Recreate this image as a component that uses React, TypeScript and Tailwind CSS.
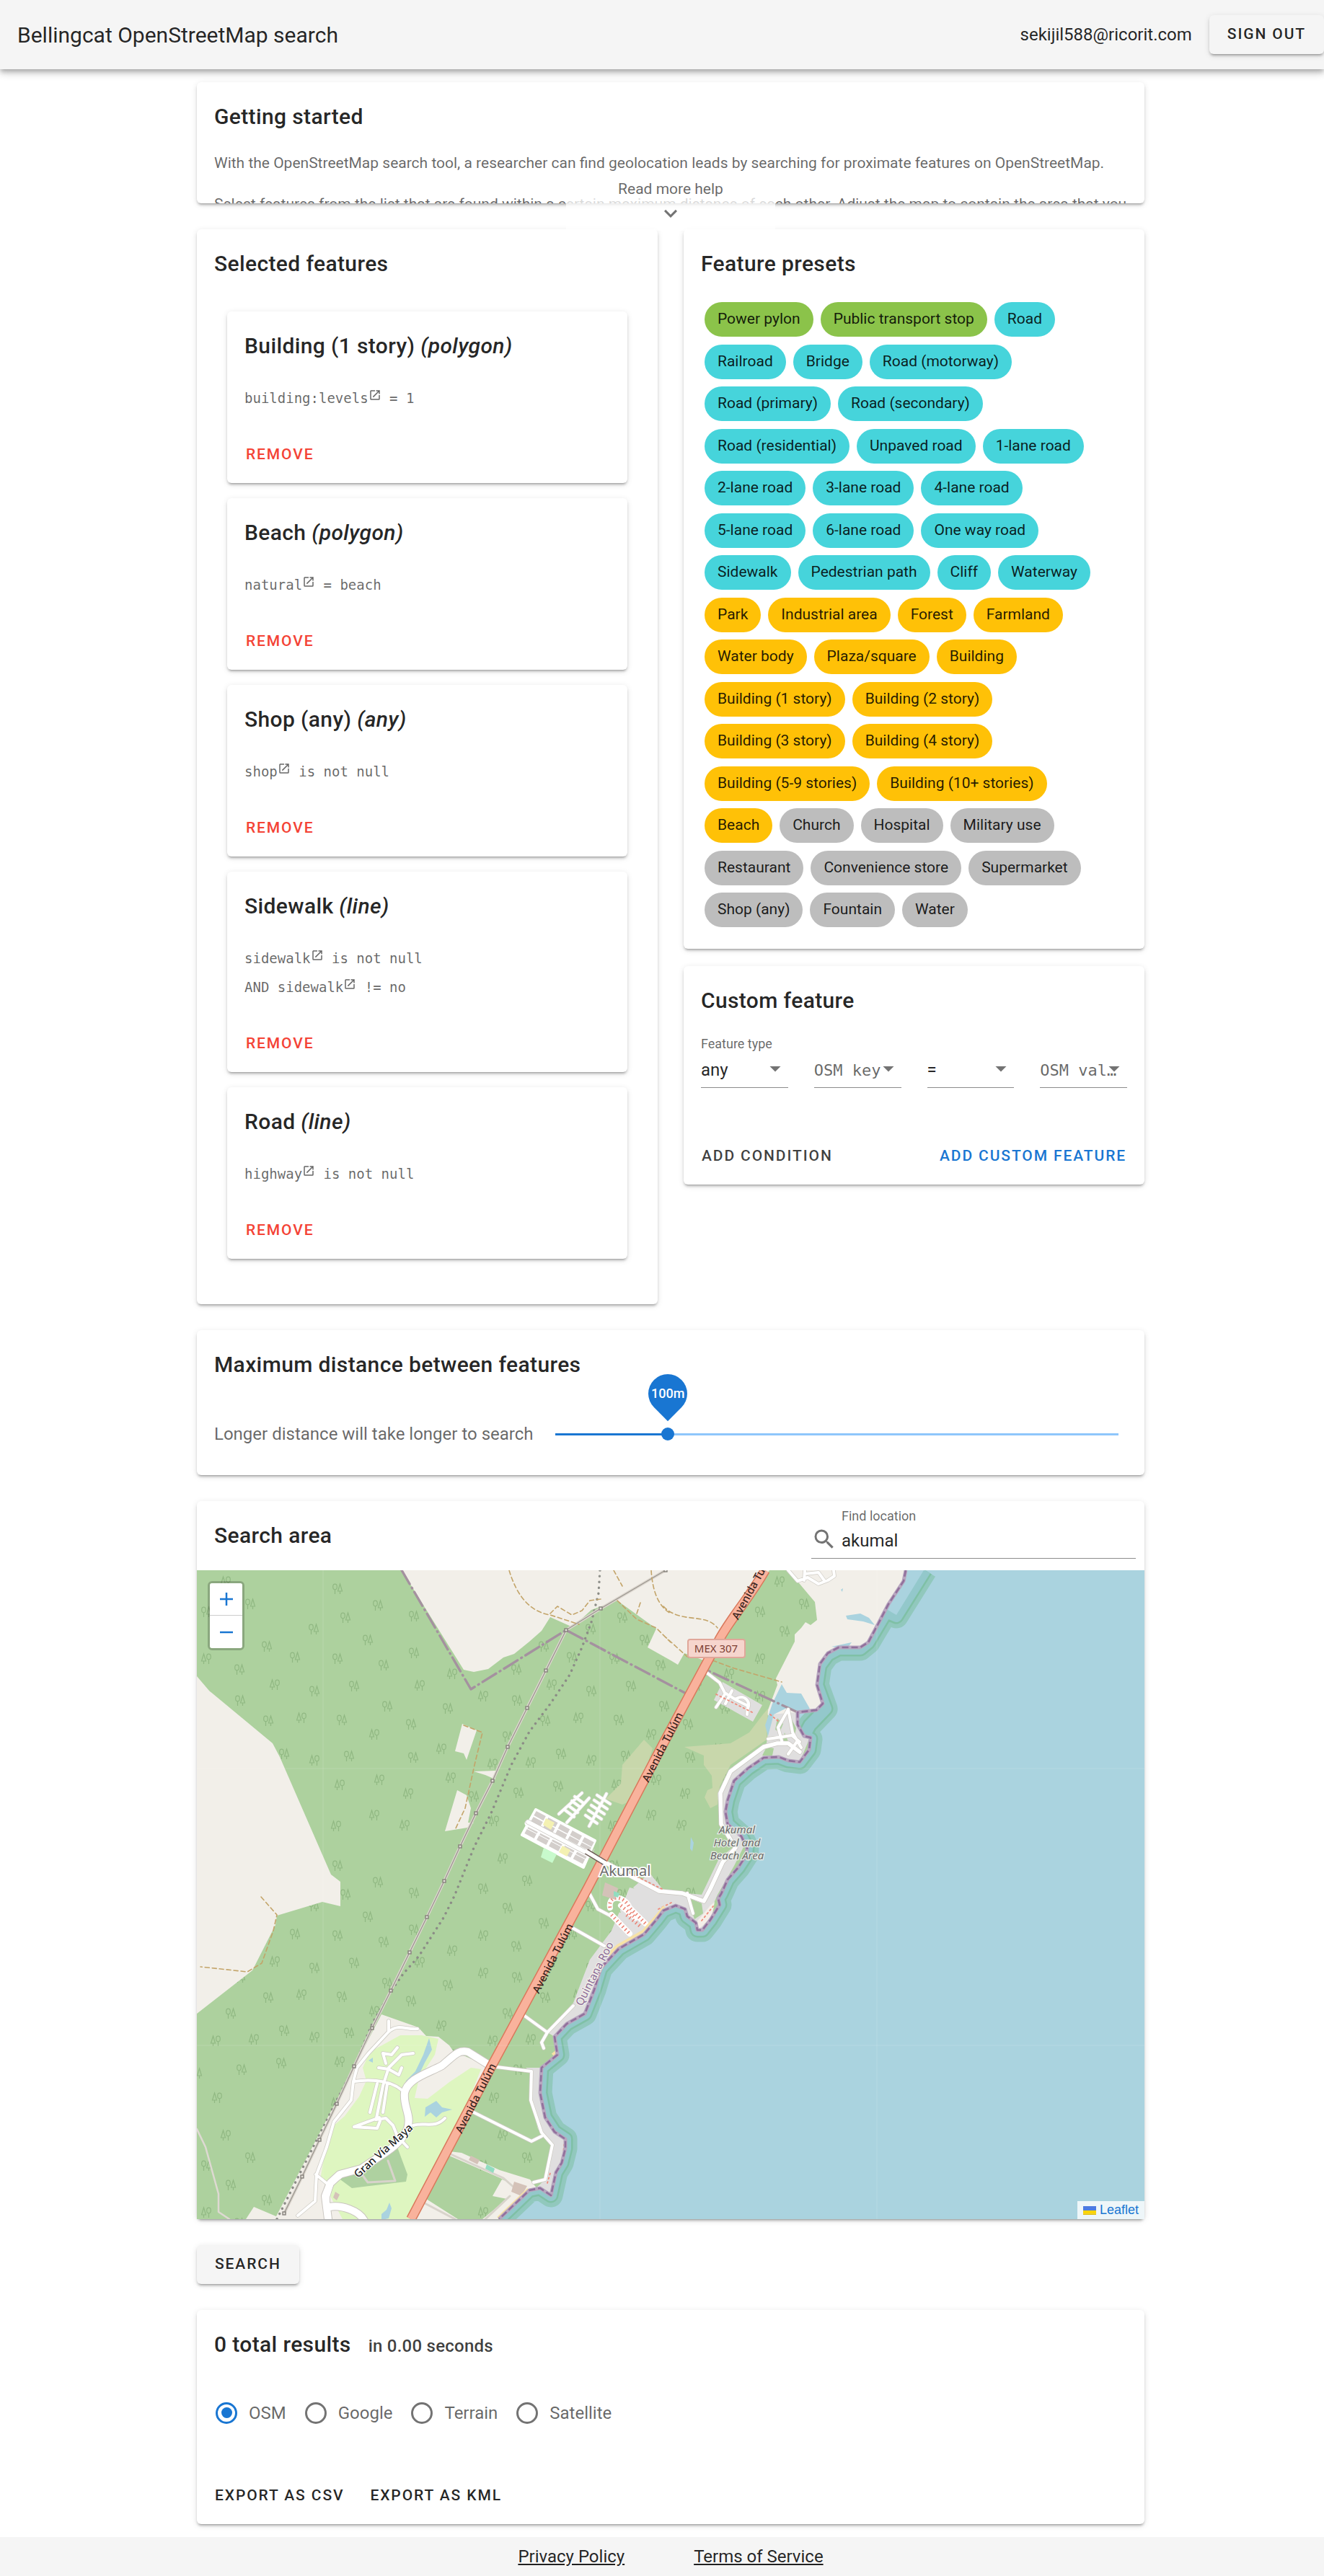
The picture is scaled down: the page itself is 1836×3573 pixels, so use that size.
import { useState } from "react";
import type { ReactNode } from "react";

const cardShadow =
  "shadow-[0_4px_2px_-3px_rgba(0,0,0,0.2),0_3px_3px_0_rgba(0,0,0,0.14),0_2px_8px_0_rgba(0,0,0,0.12)]";

function Card({ children, className = "" }: { children: ReactNode; className?: string }) {
  return <section className={`rounded-md bg-white ${cardShadow} ${className}`}>{children}</section>;
}

function CardTitle({ children }: { children: ReactNode }) {
  return (
    <h2 className="p-6 text-[30px] leading-[48px] font-medium tracking-[0.0125em] text-black/87">{children}</h2>
  );
}

function OpenInNew() {
  return (
    <svg viewBox="0 0 24 24" className="-mt-3 inline-block size-[18px] fill-current" aria-hidden="true">
      <path d="M14,3V5H17.59L7.76,14.83L9.17,16.24L19,6.41V10H21V3M19,19H5V5H12V3H5C3.89,3 3,3.9 3,5V19A2,2 0 0,0 5,21H19A2,2 0 0,0 21,19V12H19V19Z" />
    </svg>
  );
}

type Condition = { prefix?: string; key: string; rest: string };
type Feature = { name: string; kind: string; conditions: Condition[] };

const selected: Feature[] = [
  { name: "Building (1 story)", kind: "polygon", conditions: [{ key: "building:levels", rest: "= 1" }] },
  { name: "Beach", kind: "polygon", conditions: [{ key: "natural", rest: "= beach" }] },
  { name: "Shop (any)", kind: "any", conditions: [{ key: "shop", rest: "is not null" }] },
  {
    name: "Sidewalk",
    kind: "line",
    conditions: [
      { key: "sidewalk", rest: "is not null" },
      { prefix: "AND ", key: "sidewalk", rest: "!= no" },
    ],
  },
  { name: "Road", kind: "line", conditions: [{ key: "highway", rest: "is not null" }] },
];

function FeatureCard({ feature }: { feature: Feature }) {
  return (
    <li className={`rounded-md bg-white ${cardShadow}`}>
      <h3 className="p-6 text-[30px] leading-[48px] font-medium tracking-[0.0125em] text-black/87">
        {feature.name} <em>({feature.kind})</em>
      </h3>
      <div className="px-6 pt-1 font-['DejaVu_Sans_Mono',monospace] text-[19px] leading-10 text-black/60">
        {feature.conditions.map((c, i) => (
          <p key={i} className="h-10 whitespace-pre">
            {c.prefix}
            <a href="#wiki">
              {c.key}
              <OpenInNew />
            </a>{" "}
            {c.rest}
          </p>
        ))}
      </div>
      <div className="px-3 pt-8 pb-3">
        <button className="h-[54px] px-[14px] text-[21px] font-medium tracking-[0.09em] text-[#f44336] uppercase">
          Remove
        </button>
      </div>
    </li>
  );
}

const presets: { color: string; names: string[] }[] = [
  { color: "bg-[#8bc34a]", names: ["Power pylon", "Public transport stop"] },
  {
    color: "bg-[#46d4db]",
    names: [
      "Road", "Railroad", "Bridge", "Road (motorway)", "Road (primary)", "Road (secondary)",
      "Road (residential)", "Unpaved road", "1-lane road", "2-lane road", "3-lane road", "4-lane road",
      "5-lane road", "6-lane road", "One way road", "Sidewalk", "Pedestrian path", "Cliff", "Waterway",
    ],
  },
  {
    color: "bg-[#ffc107]",
    names: [
      "Park", "Industrial area", "Forest", "Farmland", "Water body", "Plaza/square", "Building",
      "Building (1 story)", "Building (2 story)", "Building (3 story)", "Building (4 story)",
      "Building (5-9 stories)", "Building (10+ stories)", "Beach",
    ],
  },
  {
    color: "bg-[#bdbdbd]",
    names: [
      "Church", "Hospital", "Military use", "Restaurant", "Convenience store", "Supermarket",
      "Shop (any)", "Fountain", "Water",
    ],
  },
];

function Caret() {
  return (
    <svg viewBox="0 0 24 24" className="pointer-events-none absolute right-0 bottom-2 size-9 fill-black/55" aria-hidden="true">
      <path d="M7,10L12,15L17,10H7Z" />
    </svg>
  );
}

function CustomField({ id, label, children }: { id: string; label?: string; children: ReactNode }) {
  return (
    <div className="relative flex min-w-0 flex-1 flex-col border-b border-black/45">
      <label htmlFor={id} className="h-6 text-lg leading-6 whitespace-nowrap text-black/60">
        {label}
      </label>
      {children}
      <Caret />
    </div>
  );
}

/* One repeat of the woodland texture: [x, y, conifer first?] within a 384px tile. */
const trees: [number, number, number][] = [
  [20, 26, 0], [31, 66, 0], [76, 49, 0], [126, 64, 0], [62, 97, 0], [20, 123, 0], [126, 115, 0],
  [84, 132, 0], [179, 144, 1], [43, 161, 0], [134, 160, 1], [222, 175, 1], [89, 189, 0], [173, 192, 0],
  [269, 181, 0], [317, 159, 1], [372, 168, 0], [268, 138, 0], [306, 106, 0], [345, 121, 0], [26, 208, 0],
  [122, 214, 0], [71, 228, 1], [308, 209, 0], [354, 205, 1], [36, 258, 0], [125, 260, 0], [164, 248, 1],
  [256, 231, 0], [235, 269, 1], [288, 267, 1], [330, 255, 0], [372, 264, 1], [23, 298, 1], [78, 291, 1],
  [177, 288, 1], [271, 309, 0], [326, 300, 0], [118, 310, 1], [209, 314, 0], [71, 340, 1], [18, 355, 1],
  [113, 354, 1], [237, 348, 1], [371, 82, 0], [249, 16, 1], [283, 47, 0], [222, 58, 0], [256, 85, 0],
  [222, 123, 1],
];

const coast =
  "M983,0 L980,15 959,47 946,72 931,100 920,107 890,107 875,115 864,130 860,159 868,185 859,194 833,197 833,214 842,230 851,232 849,249 836,266 820,264 807,259 786,260 764,275 745,292 736,319 733,335 736,352 755,369 763,385 762,395 751,412 736,429 727,449 723,455 725,464 712,485 701,499 694,499 692,489 680,480 677,470 664,465 647,472 637,485 620,505 585,525 560,552 551,582 538,615 513,629 496,647 500,672 478,690 476,725 483,759 496,779 511,789 511,802 506,822 498,835 491,867 476,857 461,860 419,900";
const reef =
  "M1010,0 L970,64 956,58 931,100 920,109 890,109 875,117 864,132 860,159 872,192 850,215 842,230 851,234 849,249 836,266 820,264 807,259 786,260 764,275 745,292 736,319 733,335 736,352 755,369 763,385 762,395 751,412 736,429 727,449 723,455 725,464 712,485 701,499 694,499 692,489 680,480 677,470 664,465 647,472 637,485 620,505 585,525 560,552 551,582 538,615 513,629 496,647 500,672 478,690 476,725 483,759 496,779 511,789 511,802 506,822 498,835 491,867 476,857 461,860 419,900";
const powerLine =
  "650,0 560,53 512,83 484,139 458,191 431,245 410,292 387,337 365,383 343,431 319,481 295,530 269,583 243,635 218,688 194,740 170,790 146,841 121,892";
const localRoads =
  "M182,900 L181,870 187,850 205,836 228,830 M459,349 L560,402 641,445 673,448 703,459 712,442 729,405 747,385 727,352 726,309 740,279 786,245 805,240 820,240 836,252";
const viaMaya =
  "M182,900 L178,868 185,850 198,838 228,830 C260,808 280,800 292,775 C298,755 286,745 288,725 C292,705 320,698 340,687 C358,672 362,665 376,668 L408,688 M184,883 C200,880 225,888 232,902";
const minorRoads =
  "M266,625 L266,640 238,670 222,690 217,709 214,735 190,765 180,800 166,838 164,875 140,895 M266,640 C280,628 290,638 306,636 M218,709 C245,705 275,708 290,727 M253,759 L245,762 218,772 250,774 254,764 M248,762 L262,760 272,770 278,785 292,800 M240,752 L250,712 M258,752 L264,712 M249,760 L258,715 266,690 284,672 300,670 M252,690 L266,692 280,700 284,690 M262,684 L258,670 270,672 278,662 M300,770 C315,765 330,775 344,760 M165,838 L182,852 M408,688 L464,695 463,735 478,780 493,797 483,845 467,849 M384,752 L464,792 478,785 M519,495 L565,521 M453,617 L486,641 522,604 M486,641 L478,655 481,663 M541,442 L556,470 575,480 M680,448 L688,476 M703,139 L725,156 732,170 748,180 764,188 763,200 M732,172 L720,190 M742,167 L733,185 M748,178 C760,172 768,182 764,192 M820,193 L806,218 812,240 M820,193 L826,225 838,246 M792,234 L825,229 836,238 M832,238 L820,255 M820,0 L833,15 847,10 862,19 875,14 884,8 883,0 M843,0 L842,14 M843,5 L862,3 870,14";
const villageStreets =
  "M513,350 L544,316 M502,338 L534,309 M544,355 L568,310 M520,320 l12,9 M516,327 l12,9 M511,333 l12,9 M524,314 l12,9 M555,312 l18,12 M551,319 l18,12 M547,326 l18,12 M543,333 l18,12 M539,340 l16,11";

function TreePair({ x, y, coniferFirst }: { x: number; y: number; coniferFirst: boolean }) {
  const c = coniferFirst ? -3.5 : 3.5;
  return (
    <g>
      <path d={`M${x + c},${y - 7} l3,10 h-6 z M${x + c},${y + 3} v4`} />
      <ellipse cx={x - c} cy={y - 3} rx="2.8" ry="3.8" />
      <path d={`M${x - c},${y + 1} v6`} />
    </g>
  );
}

function StreetName({ x, y, angle, children }: { x: number; y: number; angle: number; children: string }) {
  return (
    <text x={x} y={y} transform={`rotate(${angle} ${x} ${y})`} textAnchor="middle" dominantBaseline="central" fontSize="15" fontWeight="500" fill="#3a2420">
      {children}
    </text>
  );
}

function AkumalMap() {
  return (
    <svg viewBox="0 0 1314 900" preserveAspectRatio="xMidYMid slice" className="block h-full w-full font-['Noto_Sans',sans-serif]" role="img" aria-label="Map of Akumal">
      <defs>
        <pattern id="woodland" x="175" y="0" width="384" height="384" patternUnits="userSpaceOnUse">
          <rect width="384" height="384" fill="#add19e" />
          <g fill="none" stroke="#90b882" strokeWidth="1.2">
            {trees.map(([x, y, c]) => (
              <TreePair key={`${x}-${y}`} x={x} y={y} coniferFirst={c === 1} />
            ))}
          </g>
        </pattern>
        <clipPath id="land">
          <path d={`${coast} L0,900 0,0 Z`} />
        </clipPath>
      </defs>
      <rect width="1314" height="900" fill="#aad3df" />
      <g fill="none" strokeLinejoin="round">
        <path d={reef} stroke="#91c8bd" strokeWidth="33" />
        <path d={reef} stroke="#7fc0a6" strokeWidth="21" />
        <path d={reef} stroke="#93c8cb" strokeWidth="16" />
      </g>
      <path d="M980,0 L1008,0 970,62 958,55 Z" fill="#aad3df" />
      <g clipPath="url(#land)">
        <rect width="1314" height="900" fill="url(#woodland)" />
        {/* open ground */}
        <g fill="#f2efe9">
          <path d="M284,0 L370,138 384,141 404,137 425,121 440,116 461,99 478,84 490,65 519,78 534,67 547,55 583,42 637,81 625,107 657,125 667,131 676,115 703,125 725,95 794,0 Z" />
          <path d="M820,0 L857,44 860,69 851,76 844,72 838,80 829,89 829,99 803,150 805,159 790,199 833,240 1000,200 1000,0 Z" />
          <path d="M0,147 L17,167 105,240 115,259 186,422 199,432 199,466 174,460 111,479 109,492 77,555 0,615 Z" />
          <path d="M368,213 L388,222 374,263 370,254 358,251 Z M361,305 L374,312 380,330 376,350 384,350 375,357 344,362 Z M384,279 L414,278 414,290 400,284 Z" />
          <path d="M256,616 L307,634 318,646 335,647 350,659 357,669 372,674 408,690 297,900 108,900 Z" />
          <path d="M350,806 L367,808 420,832 462,845 472,858 446,872 432,886 425,900 396,900 430,872 410,868 423,845 432,848 350,812 Z" />
          <path d="M315,870 L362,900 300,900 Z M79,883 L112,897 108,900 68,900 Z" />
        </g>
        {/* golf course */}
        <path d="M282,645 L312,645 335,650 330,672 308,705 302,732 320,733 350,710 380,690 394,692 385,715 372,745 345,800 297,900 202,900 186,870 172,840 178,800 190,770 205,757 225,730 235,708 230,690 240,668 Z" fill="#def6c0" />
        <path d="M276,795 L292,838 290,848 215,857 192,840 205,836 228,830 248,818 Z" fill="#aed1a0" />
        <path d="M322,649 L326,665 316,683 305,706 294,720 288,718 290,708 303,695 314,672 Z M317,745 L332,736 340,745 354,748 340,752 332,759 324,752 316,758 Z M238,680 l6,-4 l0,7 z M256,893 l7,-6 l4,-10 l3,8 l-4,14 l-10,2 z" fill="#aad3df" />
        {/* scrub */}
        <path d="M620,235 L632,247 618,290 608,300 602,320 590,325 567,317 588,296 590,270 Z M676,245 L740,240 766,225 785,200 792,192 790,235 740,270 725,300 722,325 712,330 704,315 708,305 715,302 714,285 703,270 703,257 Z" fill="#c8d7ab" />
        {/* built-up strip along the shore */}
        <g fill="#e0dfdf">
          <path d="M729,155 L784,187 771,210 717,180 Z M795,200 L833,197 840,228 850,232 836,266 786,262 745,292 733,340 760,380 745,410 722,450 700,500 675,475 640,480 605,440 628,420 648,445 700,450 724,400 745,383 727,360 722,310 740,275 790,240 Z" />
          <path d="M600,440 L640,450 650,470 620,505 585,525 560,552 551,582 538,615 513,629 496,647 486,641 522,600 545,540 575,500 Z M456,690 L478,690 476,725 483,759 511,789 506,822 491,867 467,860 483,845 493,797 473,775 463,735 464,697 Z" />
        </g>
        <path d="M805,205 l8,8 l-5,12 l-6,-4 z M815,225 l8,20 l-12,-4 z M824,205 l7,14 l-2,10 z M790,245 l10,2 l-2,10 l-14,0 z M680,454 l20,8 l2,14 l-12,8 z M556,445 l22,5 l10,25 l-22,-5 z" fill="#add19e" />
        <path d="M694,499 L692,489 712,465 718,460 714,482 Z" fill="#f5efe9" />
        {/* lagoons */}
        <path d="M811,158 L818,170 838,171 850,192 856,198 846,207 820,190 800,200 792,230 788,215 798,185 Z M900,63 L920,60 932,66 940,76 924,71 902,68 Z M893,27 l3,-2 l-1,5 z M880,106 l28,-6 l-6,8 z M685,370 l4,8 l-2,12 l-3,-4 z M848,195 L868,186 862,207 844,232 834,214 834,198 Z" fill="#aad3df" />
        <path d="M847,195 L868,172 878,198 862,205 Z" fill="#f2efe9" />

        <g fill="none" strokeLinecap="round" strokeLinejoin="round">
          <path d="M0,775 L12,800 30,865 30,890 45,900" stroke="#ded9d2" strokeWidth="2.5" />
          {/* railway and tracks */}
          <polyline points="559,0 557,32 547,72 534,107 517,145 491,184 461,224 436,270 408,337 384,385 357,452 342,482 308,535 286,560 269,584 243,629 218,689 194,735 111,900" stroke="#8b8c86" strokeWidth="3.4" strokeDasharray="0.1 8" />
          <polyline points={powerLine} stroke="#dcd6ce" strokeWidth="4" />
          <polyline points={powerLine} stroke="#9b9790" strokeWidth="1.3" />
          <g stroke="#c3a469" strokeWidth="1.6" strokeDasharray="6 4">
            <path d="M433,0 C445,40 465,58 490,62 L530,75 M490,60 L500,50 520,62 534,56 545,42 560,40 M583,42 L610,68 637,80 657,100 M615,45 L610,60 M630,0 C632,30 640,50 657,60 M647,50 C670,75 705,58 722,80 M647,90 L680,120 M715,125 L745,136 811,155 M578,0 L590,22 M370,215 L396,225 385,270 372,330 358,360 M89,453 L111,478 106,500 90,545 70,557 5,550" />
          </g>
          {/* administrative boundary */}
          <path d="M284,0 L380,165 512,83 686,175 708,139 833,197" stroke="#a4919f" strokeWidth="3.4" strokeDasharray="22 6 1 6" />

          {/* residential block */}
          <path d="M470,332 L552,375 536,412 451,367 Z" fill="#fff" stroke="#fff" strokeWidth="4" />
          <g stroke="#d3cecb" strokeWidth="7" strokeLinecap="butt" strokeDasharray="15 4">
            <path d="M469,337 L552,382 M465,345 L550,390 M456,362 L540,406 M460,355 L542,398" />
          </g>
          <path d="M459,351 L544,394" stroke="#fff" strokeWidth="9" />
          <path d="M484,344 l12,6 l-5,10 l-11,-7 z M507,382 l11,6 l-5,9 l-11,-6 z" fill="#f4f1b2" />
          <path d="M481,385 l18,9 l-6,12 l-16,-8 z" fill="#c8facc" />
          <path d={villageStreets} stroke="#dedbd7" strokeWidth="5" />
          <path d={villageStreets} stroke="#fff" strokeWidth="3.6" />

          {/* white roads */}
          <path d={minorRoads} stroke="#cfccc5" strokeWidth="5.5" />
          <path d={localRoads} stroke="#c9c6c0" strokeWidth="7" />
          <path d={viaMaya} stroke="#c9c5bf" strokeWidth="12" />
          <path d={minorRoads} stroke="#fff" strokeWidth="4" />
          <path d={localRoads} stroke="#fff" strokeWidth="5.5" />
          <path d={viaMaya} stroke="#fff" strokeWidth="10" />
          <path d="M229,838 l8,11 l38,-2 l-10,-28 M352,810 L425,843 442,858 M316,878 L358,900 M434,868 L400,900" stroke="#d8d3cb" strokeWidth="3" />

          {/* trunk road */}
          <path d="M788,0 C765,40 745,60 725,95 L647,240 543,439 408,689 297,900" stroke="#d9795c" strokeWidth="14" strokeLinecap="butt" />
          <path d="M788,0 C765,40 745,60 725,95 L647,240 543,439 408,689 297,900" stroke="#f9b29c" strokeWidth="11" strokeLinecap="butt" />
          <path d="M540,390 L566,406" stroke="#6d5b55" strokeWidth="8" strokeLinecap="butt" />
          <path d="M538,389 L568,407" stroke="#fff" strokeWidth="5.5" strokeLinecap="butt" />

          {/* resort buildings */}
          <path d="M573,468 C570,450 592,450 600,468 L622,490 M575,478 L600,504 M588,465 L608,482" stroke="#fff" strokeWidth="8" />
          <path d="M573,468 C570,450 592,450 600,468 L622,490 M575,478 L600,504 M588,465 L608,482 M596,478 L615,494" stroke="#ea7f70" strokeWidth="5" strokeDasharray="1.5 4" strokeLinecap="butt" />
          <path d="M600,420 l45,22 M640,470 l20,-10 M795,200 l12,10 M720,172 l50,25 M700,486 l16,-20 M504,780 l6,10 l-2,18 M486,850 l4,-14" stroke="#ef8a7a" strokeWidth="1.8" strokeDasharray="2 4" />
        </g>
        <g fill="#d4c2b8">
          <path d="M566,433 l18,8 l-4,16 l-18,-6 z M440,848 l18,6 l-8,14 l-14,-6 z M380,812 l12,6 l-3,6 l-12,-6 z M192,862 l6,4 l-4,8 l-5,-4 z" />
        </g>
        <path d="M402,824 l11,6 l-2,6 l-11,-6 z M578,445 l8,3 l-2,6 l-6,-2 z" fill="#92ddc0" />
        <path d="M650,468 L637,484 620,503 585,523 572,535" fill="none" stroke="#f7e2a6" strokeWidth="9" />
        <path d="M495,668 L500,674 486,688 M461,860 L419,900" fill="none" stroke="#f7e2a6" strokeWidth="8" />
        <g fill="#e4e0da" stroke="#85817b" strokeWidth="1.4">
          {powerLine.split(" ").map((point) => {
            const [x, y] = point.split(",").map(Number);
            return <rect key={point} x={x - 2} y={y - 2} width="4" height="4" />;
          })}
        </g>
      </g>
      <path d={coast} fill="none" stroke="#b7a6bf" strokeWidth="5" strokeLinejoin="round" />
      <path d={coast} fill="none" stroke="#91709c" strokeWidth="2.6" strokeLinejoin="round" strokeDasharray="9 4" />
      <path d="M175,0 V900 M559,0 V900 M943,0 V900 M0,275 H1314 M0,659 H1314" stroke="#fff" strokeOpacity="0.15" fill="none" />

      {/* labels */}
      <StreetName x={645} y={245} angle={-63}>Avenida Tulúm</StreetName>
      <StreetName x={771} y={20} angle={-61}>Avenida Tulúm</StreetName>
      <StreetName x={493} y={538} angle={-63}>Avenida Tulúm</StreetName>
      <StreetName x={386} y={732} angle={-63}>Avenida Tulúm</StreetName>
      <text x="262" y="809" transform="rotate(-42 262 809)" textAnchor="middle" fontSize="15" fontWeight="500" fill="#222" stroke="#fff" strokeWidth="2" paintOrder="stroke">
        Gran Vía Maya
      </text>
      <text x="556" y="562" transform="rotate(-63 556 562)" textAnchor="middle" fontSize="15" fill="#8a6a96" stroke="#f2efe9" strokeWidth="2.5" paintOrder="stroke">
        Quintana Roo
      </text>
      <text x="594" y="424" textAnchor="middle" fontSize="20" fill="#6b6b6b" stroke="#fff" strokeWidth="3.5" paintOrder="stroke">
        Akumal
      </text>
      <g textAnchor="middle" fontSize="15" fontStyle="italic" fill="#6a6a6a" stroke="#e8ece6" strokeWidth="2.5" paintOrder="stroke">
        <text x="749" y="365">Akumal</text>
        <text x="749" y="383">Hotel and</text>
        <text x="749" y="401">Beach Area</text>
      </g>
      <rect x="681" y="96" width="79" height="25" rx="3" fill="#f6d5cd" stroke="#e0a79a" strokeWidth="2" />
      <text x="720" y="114" textAnchor="middle" fontSize="15" fill="#7c4034">
        MEX 307
      </text>
    </svg>
  );
}

function DistanceSlider() {
  const max = 500;
  const [metres, setMetres] = useState(100);
  const left = `${(metres / max) * 100}%`;
  return (
    <div className="relative mx-3 flex h-12 flex-1 items-center">
      <div className="h-[3px] w-full bg-[#8ec6fb]">
        <div className="h-full bg-[#1976d2]" style={{ width: left }} />
      </div>
      <div className="absolute size-[18px] -translate-x-1/2 rounded-full bg-[#1976d2]" style={{ left }} />
      <div className="absolute bottom-[53px] -translate-x-1/2" style={{ left }}>
        <div className="flex size-[54px] rotate-45 items-center justify-center rounded-full rounded-br-none bg-[#1976d2]">
          <span className="-rotate-45 text-lg font-medium text-white">{metres}m</span>
        </div>
      </div>
      <input
        id="distance"
        type="range"
        min={0}
        max={max}
        value={metres}
        onChange={(e) => setMetres(Number(e.target.value))}
        className="absolute inset-0 w-full cursor-pointer opacity-0"
      />
    </div>
  );
}

const raisedButton = `h-[54px] rounded-md bg-[#f5f5f5] px-[25px] text-[21px] font-medium tracking-[0.09em] text-black/87 uppercase ${cardShadow}`;
const flatButton = "h-[54px] px-3 text-[21px] font-medium tracking-[0.09em] uppercase";

export default function App() {
  const [base, setBase] = useState("OSM");
  return (
    <div className="overflow-x-hidden bg-white font-[Roboto,sans-serif] text-black/87">
      <header className="relative flex h-24 items-center bg-[#f5f5f5] pl-6 shadow-[0_3px_6px_-1px_rgba(0,0,0,0.2),0_6px_8px_0_rgba(0,0,0,0.14),0_2px_15px_0_rgba(0,0,0,0.12)]">
        <h1 className="text-[30px] leading-[45px]">Bellingcat OpenStreetMap search</h1>
        <span className="ml-auto text-2xl">sekijil588@ricorit.com</span>
        <button className={`ml-6 ${raisedButton}`}>Sign out</button>
      </header>

      <main className="pt-[18px] pb-[18px] pl-6">
        <div className="mx-auto flex w-full max-w-[1314px] flex-col gap-9">
          <div className="relative">
            <Card className="h-[168px] overflow-hidden">
              <CardTitle>Getting started</CardTitle>
              <div className="flex flex-col gap-6 px-6 text-[21px] leading-[33px] text-black/60">
                <p>
                  With the OpenStreetMap search tool, a researcher can find geolocation leads by searching for proximate
                  features on OpenStreetMap.
                </p>
                <p>
                  Select features from the list that are found within a certain maximum distance of each other. Adjust
                  the map to contain the area that you would like to search.
                </p>
              </div>
            </Card>
            <div className="absolute inset-x-0 top-[130px] flex justify-center">
              <button className="flex w-[290px] flex-col items-center text-[21px] leading-9 text-black/60">
                Read more help
                <span className="-mt-2 flex h-12 w-full items-center justify-center rounded-t-xl bg-white/75">
                  <svg viewBox="0 0 24 24" className="size-[36px] fill-black/55" aria-hidden="true">
                    <path d="M7.41,8.58L12,13.17L16.59,8.58L18,10L12,16L6,10L7.41,8.58Z" />
                  </svg>
                </span>
              </button>
            </div>
          </div>

          <div className="grid grid-cols-2 items-start gap-9">
            <Card>
              <CardTitle>Selected features</CardTitle>
              <ul className="flex flex-col gap-[21px] px-[42px] pt-[18px] pb-[63px]">
                {selected.map((f) => (
                  <FeatureCard key={f.name} feature={f} />
                ))}
              </ul>
            </Card>

            <div className="flex flex-col gap-6">
              <Card>
                <CardTitle>Feature presets</CardTitle>
                <div className="flex min-h-[902px] flex-wrap content-between gap-x-[10px] pt-[5px] pr-9 pb-[30px] pl-[29px]">
                  {presets.map((group) =>
                    group.names.map((name) => (
                      <button key={name} className={`h-12 rounded-full px-[18px] text-[21px] whitespace-nowrap text-black/87 ${group.color}`}>
                        {name}
                      </button>
                    )),
                  )}
                </div>
              </Card>

              <Card>
                <CardTitle>Custom feature</CardTitle>
                <div className="flex gap-9 px-6">
                  <CustomField id="type" label="Feature type">
                    <select id="type" className="h-12 w-full appearance-none bg-transparent text-2xl font-normal">
                      <option>any</option>
                      <option>line</option>
                      <option>polygon</option>
                    </select>
                  </CustomField>
                  <CustomField id="key">
                    <input id="key" aria-label="OSM key" placeholder="OSM key" className="h-12 w-full font-['DejaVu_Sans_Mono',monospace] text-[22px] text-ellipsis placeholder:text-black/60" />
                  </CustomField>
                  <CustomField id="operator">
                    <select id="operator" aria-label="Operator" className="h-12 w-full appearance-none bg-transparent text-2xl font-normal">
                      <option>=</option>
                      <option>!=</option>
                    </select>
                  </CustomField>
                  <CustomField id="value">
                    <input id="value" aria-label="OSM value" placeholder="OSM value" className="h-12 w-full pr-2 font-['DejaVu_Sans_Mono',monospace] text-[22px] text-ellipsis placeholder:text-black/60" />
                  </CustomField>
                </div>
                <div className="flex justify-between px-[13px] pt-[68px] pb-3">
                  <button className={`${flatButton} text-black/75`}>Add condition</button>
                  <button className={`${flatButton} text-[#1976d2]`}>Add custom feature</button>
                </div>
              </Card>
            </div>
          </div>

          <Card>
            <CardTitle>Maximum distance between features</CardTitle>
            <div className="flex h-[105px] items-start px-6">
              <label htmlFor="distance" className="mr-[18px] text-2xl leading-[96px] text-black/60">
                Longer distance will take longer to search
              </label>
              <div className="flex h-24 flex-1 items-center">
                <DistanceSlider />
              </div>
            </div>
          </Card>

          <Card>
            <div className="flex h-24 items-start justify-between pr-3">
              <CardTitle>Search area</CardTitle>
              <div className="mt-3 flex h-[68px] w-[450px] items-end border-b border-black/45">
                <svg viewBox="0 0 24 24" className="mb-2 size-9 fill-black/55" aria-hidden="true">
                  <path d="M9.5,3A6.5,6.5 0 0,1 16,9.5C16,11.11 15.41,12.59 14.44,13.73L14.71,14H15.5L20.5,19L19,20.5L14,15.5V14.71L13.73,14.44C12.59,15.41 11.11,16 9.5,16A6.5,6.5 0 0,1 3,9.5A6.5,6.5 0 0,1 9.5,3M9.5,5C7,5 5,7 5,9.5C5,12 7,14 9.5,14C12,14 14,12 14,9.5C14,7 12,5 9.5,5Z" />
                </svg>
                <div className="ml-[6px] flex flex-1 flex-col">
                  <label htmlFor="location" className="text-lg leading-5 text-black/60">
                    Find location
                  </label>
                  <input id="location" defaultValue="akumal" className="h-12 w-full text-2xl" />
                </div>
              </div>
            </div>
            <div className="relative h-[900px] overflow-hidden">
              <AkumalMap />
              <div className="absolute top-[15px] left-[15px] flex flex-col rounded-md border-[3px] border-black/20 bg-clip-padding">
                <button aria-label="Zoom in" className="flex h-[45px] w-[45px] items-center justify-center rounded-t-[3px] border-b border-[#ccc] bg-white">
                  <svg viewBox="0 0 18 18" className="size-[18px] stroke-[#1976d2]" strokeWidth="2.5">
                    <path d="M9 0V18M0 9H18" />
                  </svg>
                </button>
                <button aria-label="Zoom out" className="flex h-[45px] w-[45px] items-center justify-center rounded-b-[3px] bg-white">
                  <svg viewBox="0 0 18 18" className="size-[18px] stroke-[#1976d2]" strokeWidth="2.5">
                    <path d="M0 9H18" />
                  </svg>
                </button>
              </div>
              <a href="#leaflet" className="absolute right-0 bottom-0 flex h-[25px] items-center gap-[5px] bg-white/80 px-2 font-['Liberation_Sans',sans-serif] text-lg leading-[25px] text-[#1976d2]">
                <svg viewBox="0 0 12 8" className="h-3 w-[18px]" aria-hidden="true">
                  <path fill="#4C7BE1" d="M0 0h12v4H0z" />
                  <path fill="#FFD500" d="M0 4h12v3H0z" />
                  <path fill="#E0BC00" d="M0 7h12v1H0z" />
                </svg>
                Leaflet
              </a>
            </div>
          </Card>

          <button className={`self-start ${raisedButton}`}>Search</button>

          <Card>
            <div className="flex items-baseline">
              <CardTitle>0 total results</CardTitle>
              <span className="text-2xl font-medium tracking-[0.01em] text-black/75">in 0.00 seconds</span>
            </div>
            <fieldset className="flex h-[93px] items-center gap-[26px] px-[26px] text-2xl text-black/60">
              {["OSM", "Google", "Terrain", "Satellite"].map((name) => (
                <label key={name} className="flex items-center gap-4">
                  <input
                    type="radio"
                    name="base"
                    checked={base === name}
                    onChange={() => setBase(name)}
                    className="flex size-[30px] appearance-none items-center justify-center rounded-full border-[3px] border-black/55 checked:border-[#1976d2] checked:before:size-[15px] checked:before:rounded-full checked:before:bg-[#1976d2]"
                  />
                  {name}
                </label>
              ))}
            </fieldset>
            <div className="flex gap-3 px-[13px] pt-[42px] pb-3">
              <button className={flatButton}>Export as CSV</button>
              <button className={flatButton}>Export as KML</button>
            </div>
          </Card>
        </div>
      </main>

      <footer className="flex h-[54px] items-center justify-center gap-24 bg-[#f5f5f5] pl-6 text-2xl">
        <a href="#privacy" className="underline underline-offset-2">Privacy Policy</a>
        <a href="#terms" className="underline underline-offset-2">Terms of Service</a>
      </footer>
    </div>
  );
}
